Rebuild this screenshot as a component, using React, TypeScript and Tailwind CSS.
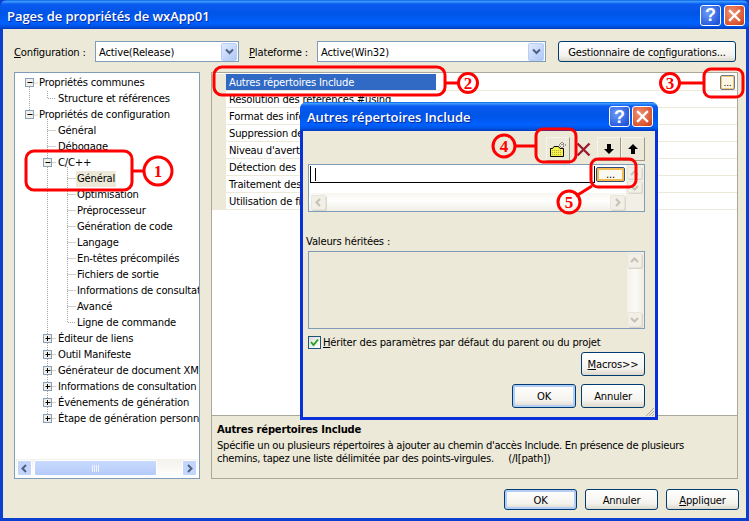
import React from "react";

const titleBg = "bg-[linear-gradient(180deg,#0a5fe0_0%,#3c9bff_5%,#0a5cf0_14%,#0054e6_45%,#0060ff_80%,#0052e0_92%,#0138c0_100%)]";
const btn = "flex items-center justify-center rounded-[3px] border border-[#003c74] bg-[linear-gradient(180deg,#ffffff_0%,#f4f3ee_70%,#dcd8cc_100%)] pt-px text-black";

function CapButton({ kind }: { kind: "help" | "close" }) {
  const cls = kind === "help"
    ? "bg-[radial-gradient(circle_at_35%_35%,#6f9cf5,#2a5fe0_70%,#1c45c4)]"
    : "bg-[radial-gradient(circle_at_35%_35%,#ef8f72,#dc5a34_65%,#c23a1c)]";
  return (
    <div className={`flex h-[21px] w-[21px] items-center justify-center rounded-[3px] border border-white ${cls}`}>
      {kind === "help" ? (
        <span className="font-['Liberation_Sans',sans-serif] text-[18px] leading-[20px] font-bold text-white">?</span>
      ) : (
        <svg width="13" height="13" viewBox="0 0 13 13">
          <path d="M2 2 L11 11 M11 2 L2 11" stroke="#fff" strokeWidth="2.4" strokeLinecap="square" />
        </svg>
      )}
    </div>
  );
}

function TitleBar({ text, pl, pr, pt, gap }: { text: string; pl: string; pr: string; pt: string; gap: string }) {
  return (
    <div className={`flex h-[29px] shrink-0 items-center justify-between rounded-t-[7px] ${titleBg} ${pl} ${pr} ${pt}`}>
      <span className="pt-[2px] font-['Open_Sans',sans-serif] text-[13px] font-semibold tracking-[-0.05px] text-white [text-shadow:1px_1px_#0a2a9c]">{text}</span>
      <div className={`flex ${gap}`}>
        <CapButton kind="help" />
        <CapButton kind="close" />
      </div>
    </div>
  );
}

function Combo({ text, w }: { text: string; w: string }) {
  return (
    <div className={`flex h-[21px] items-center justify-between border border-[#7f9db9] bg-white pl-[3px] pr-px ${w}`}>
      <span className="pt-px">{text}</span>
      <div className="flex h-[18px] w-[16px] items-center justify-center rounded-[2px] border border-[#b9cdf7] bg-[linear-gradient(135deg,#e1eafe,#aec8f7)]">
        <svg width="9" height="7" viewBox="0 0 9 7">
          <path d="M1 1.5 L4.5 5 L8 1.5" fill="none" stroke="#4d6185" strokeWidth="2" />
        </svg>
      </div>
    </div>
  );
}

const G = "#a5a5a5";
function Dot({ d }: { d: string }) {
  return <path d={d} stroke={G} strokeWidth="1" strokeDasharray="1 1" fill="none" />;
}
function Box({ x, plus }: { x: number; plus?: boolean }) {
  return (
    <g>
      <rect x={x - 4} y={3.5} width="8" height="8" fill="#f1efe6" stroke="#8aa0b8" />
      <path d={`M${x - 2} 7.5 H${x + 3}`} stroke="#000" />
      {plus && <path d={`M${x + 0.0} 5 V10`} stroke="#000" />}
    </g>
  );
}

type Kind = "r0" | "c0" | "r1" | "a" | "m" | "b" | "bl" | "p" | "pl";
function prefix(kind: Kind) {
  const x0 = 14.5, x1 = 32.5, x2 = 52.5;
  switch (kind) {
    case "r0": return <><Dot d={`M${x0} 8 V16 M${x0} 8 H23`} /><Box x={x0} /></>;
    case "c0": return <><Dot d={`M${x0} 0 V16 M${x1} 0 V7.5 H41`} /></>;
    case "r1": return <><Dot d={`M${x0} 0 V8 M${x0} 8 H23 M${x1} 12 V16`} /><Box x={x0} /></>;
    case "a": return <Dot d={`M${x1} 0 V16 M${x1} 7.5 H41`} />;
    case "m": return <><Dot d={`M${x1} 0 V16 M${x1} 7.5 H41 M${x2} 12 V16`} /><Box x={x1} /></>;
    case "b": return <Dot d={`M${x1} 0 V16 M${x2} 0 V16 M${x2} 7.5 H61`} />;
    case "bl": return <Dot d={`M${x1} 0 V16 M${x2} 0 V7.5 H61`} />;
    case "p": return <><Dot d={`M${x1} 0 V16 M${x1} 7.5 H41`} /><Box x={x1} plus /></>;
    case "pl": return <><Dot d={`M${x1} 0 V8 M${x1} 7.5 H41`} /><Box x={x1} plus /></>;
  }
}

const tree: [string, Kind, boolean?][] = [
  ["Propriétés communes", "r0"],
  ["Structure et références", "c0"],
  ["Propriétés de configuration", "r1"],
  ["Général", "a"],
  ["Débogage", "a"],
  ["C/C++", "m"],
  ["Général", "b", true],
  ["Optimisation", "b"],
  ["Préprocesseur", "b"],
  ["Génération de code", "b"],
  ["Langage", "b"],
  ["En-têtes précompilés", "b"],
  ["Fichiers de sortie", "b"],
  ["Informations de consultation du code source", "b"],
  ["Avancé", "b"],
  ["Ligne de commande", "bl"],
  ["Éditeur de liens", "p"],
  ["Outil Manifeste", "p"],
  ["Générateur de document XML", "p"],
  ["Informations de consultation", "p"],
  ["Événements de génération", "p"],
  ["Étape de génération personnalisée", "pl"],
];

function TreeRow({ label, kind, selected }: { label: string; kind: Kind; selected?: boolean }) {
  const w = kind === "r0" || kind === "r1" ? 23 : kind === "c0" || kind === "a" || kind === "m" || kind === "p" || kind === "pl" ? 42 : 61;
  return (
    <div className="flex h-4 items-center">
      <svg width={w} height="16" className="shrink-0 overflow-visible">{prefix(kind)}</svg>
      <span className={`whitespace-nowrap px-px leading-4 ${selected ? "bg-[#ece9d8]" : ""}`}>{label}</span>
    </div>
  );
}

function ScrollArrow({ dir, faded }: { dir: "left" | "right" | "up" | "down"; faded?: boolean }) {
  const d = { left: "M6 1 L2.5 4.5 L6 8", right: "M3 1 L6.5 4.5 L3 8", up: "M1 6 L4.5 2.5 L8 6", down: "M1 3 L4.5 6.5 L8 3" }[dir];
  return (
    <svg width="9" height="9" viewBox="0 0 9 9">
      <path d={d} fill="none" stroke={faded ? "#c4c2b6" : "#4d6185"} strokeWidth="2" />
    </svg>
  );
}

function FadedBtn({ dir, cls }: { dir: "left" | "right" | "up" | "down"; cls: string }) {
  return (
    <div className={`flex items-center justify-center rounded-[2px] border border-[#e8e6dc] bg-[#f1efe6] shadow-[1px_1px_0_#d8d6ca] ${cls}`}>
      <ScrollArrow dir={dir} faded />
    </div>
  );
}

const props = [
  "Résolution des références #using",
  "Format des informations de débogage",
  "Suppression de la bannière de démarrage",
  "Niveau d'avertissement",
  "Détection des problèmes de portabilité 64 bits",
  "Traitement des avertissements comme des erreurs",
  "Utilisation de fibres pour la sortie",
];

function Tool({ children }: { children: React.ReactNode }) {
  return (
    <div className="flex h-[24px] w-[24px] items-center justify-center border border-[#f5f4ee] border-r-[#9d9a8a] border-b-[#9d9a8a] bg-[#ece9d8]">
      {children}
    </div>
  );
}

function Dialog() {
  return (
    <div className="absolute left-[300px] top-[102px] flex h-[318px] w-[358px] flex-col rounded-t-[7px] bg-[#0831d9]">
      <TitleBar text="Autres répertoires Include" pl="pl-[7px]" pr="pr-[5px]" pt="pt-0" gap="gap-[2px]" />
      <div className="relative mx-[3px] mb-[3px] flex min-h-0 flex-1 flex-col bg-[#ece9d8] pl-[5px] pr-[10px]">
        <div className="flex justify-end pt-[6px]">
          <Tool>
            <svg width="18" height="17" viewBox="0 0 18 17">
              <path d="M1.5 7.5 H3.5 L5 5.5 H9.5 L11 7.5 H14.5 V15.5 H1.5 Z" fill="#f4f04a" stroke="#000" />
              <path d="M3 9.5H13M3 11.5H13M3 13.5H13" stroke="#b5ad3c" strokeDasharray="1 1" />
              <path d="M13 1v3M13 6v2M10 4h2M14 4h3M11 2l1 1M15 2l-1 1M11 6l1-1M15 6l-1-1" stroke="#4a4a4a" strokeDasharray="1 1" />
            </svg>
          </Tool>
          <div className="flex h-[24px] w-[27px] items-center justify-center">
            <svg width="15" height="15" viewBox="0 0 15 15">
              <path d="M1.5 1.5 L13.5 13.5 M13.5 1.5 L1.5 13.5" stroke="#9a1c30" strokeWidth="2.4" />
            </svg>
          </div>
          <Tool>
            <svg width="10" height="10" viewBox="0 0 10 10"><path d="M3 0H7V5H10L5 10L0 5H3Z" fill="#000" /></svg>
          </Tool>
          <Tool>
            <svg width="10" height="10" viewBox="0 0 10 10"><path d="M3 10H7V5H10L5 0L0 5H3Z" fill="#000" /></svg>
          </Tool>
        </div>
        <div className="mt-[3px] flex h-[48px] flex-col border border-[#7f9db9] bg-[#f1efe6]">
          <div className="flex h-[28px] bg-white">
            <div className="flex min-w-0 flex-1 flex-col pl-px pt-px">
              <div className="flex h-[17px] items-center border-b border-l border-r border-black pl-[4px]">
                <span className="block h-[13px] w-px bg-black" />
              </div>
            </div>
            <div className="flex w-[31px] items-start pl-px pt-[2px]">
              <div className="flex h-[15px] w-[29px] items-end justify-center rounded-[2px] border border-[#2c4c7c] bg-[#fbfaf2] text-[10px] leading-[12px] shadow-[inset_0_0_0_2px_#f4bd52]">...</div>
            </div>
            <div className="flex w-[18px] flex-col gap-[2px] bg-[#f1efe6] pl-px pt-[2px]">
              <FadedBtn dir="up" cls="h-[12px] w-[15px]" />
              <FadedBtn dir="down" cls="h-[12px] w-[15px]" />
            </div>
          </div>
          <div className="mr-[18px] flex flex-1 items-center justify-between bg-[linear-gradient(180deg,#f6f5ef,#ffffff_40%,#f0eee4)] pl-[2px] pr-px">
            <FadedBtn dir="left" cls="h-[15px] w-[15px]" />
            <FadedBtn dir="right" cls="h-[15px] w-[15px]" />
          </div>
        </div>
        <div className="-ml-[2px] mt-[23px] h-[14px] leading-[14px]">Valeurs héritées :</div>
        <div className="mt-[2px] flex h-[78px] justify-end border border-[#7f9db9]">
          <div className="flex w-[17px] flex-col justify-between bg-[linear-gradient(90deg,#f3f1e8,#fbfaf5,#f0eee4)] py-px">
            <FadedBtn dir="up" cls="h-[15px] w-[15px]" />
            <FadedBtn dir="down" cls="h-[15px] w-[15px]" />
          </div>
        </div>
        <div className="mt-[6px] flex h-[14px] items-center gap-[2px]">
          <div className="flex h-[13px] w-[13px] items-center justify-center border border-[#1c5180] bg-[linear-gradient(135deg,#dcdcd6,#ffffff)]">
            <svg width="9" height="9" viewBox="0 0 9 9"><path d="M1 4 L3.5 7 L8 1.5" fill="none" stroke="#21a121" strokeWidth="1.8" /></svg>
          </div>
          <span className="whitespace-nowrap"><u>H</u>ériter des paramètres par défaut du parent ou du projet</span>
        </div>
        <div className="mt-[3px] flex justify-end">
          <div className={`${btn} h-[24px] w-[64px]`}><span><u>M</u>acros&gt;&gt;</span></div>
        </div>
        <div className="mt-[8px] flex justify-end gap-[5px]">
          <div className={`${btn} h-[24px] w-[64px] shadow-[inset_0_0_0_2px_#b4cdf5]`}>OK</div>
          <div className={`${btn} h-[24px] w-[64px]`}>Annuler</div>
        </div>
        <svg width="10" height="10" viewBox="0 0 10 10" className="absolute bottom-0 right-0">
          <path d="M9 1 L1 9 M9 4 L4 9 M9 7 L7 9" stroke="#a8a596" />
        </svg>
      </div>
    </div>
  );
}

function Marks() {
  const numCls = "font-['Liberation_Serif',serif] text-[17px] font-bold";
  const num = (x: number, y: number, n: string) => (
    <text x={x} y={y} textAnchor="middle" fill="#ff0000" className={numCls}>{n}</text>
  );
  return (
    <svg width="749" height="521" className="pointer-events-none absolute left-0 top-0">
      <g fill="none" stroke="#ff0000" strokeWidth="3">
        <rect x="26" y="151" width="106" height="39" rx="8" />
        <path d="M132 171 H144" />
        <circle cx="158" cy="171" r="14" />
        <rect x="214" y="67" width="231" height="28" rx="8" />
        <path d="M445 83 H458" />
        <circle cx="468" cy="83" r="9.5" />
        <path d="M680 83 H704" />
        <circle cx="670" cy="83" r="9.5" />
        <rect x="704" y="69" width="39" height="28" rx="7" />
        <path d="M516 146 H536" />
        <circle cx="504" cy="146" r="11" />
        <rect x="536" y="129" width="40" height="33" rx="7" />
        <rect x="591" y="159" width="45" height="28" rx="7" />
        <path d="M592 186 L576 196" />
        <circle cx="569" cy="202" r="11" />
      </g>
      {num(158, 177, "1")}
      {num(468, 89, "2")}
      {num(670, 89, "3")}
      {num(504, 152, "4")}
      {num(569, 208, "5")}
    </svg>
  );
}

export default function App() {
  return (
    <div className="relative flex h-[521px] w-[749px] flex-col overflow-hidden bg-[#0a3fd0] font-['DejaVu_Sans',sans-serif] text-[10px] leading-[13px] tracking-[-0.18px] text-black">
      <TitleBar text="Pages de propriétés de wxApp01" pl="pl-[7px]" pr="pr-[4px]" pt="pt-px" gap="gap-[3px]" />
      <div className="mx-[3px] mb-[3px] flex min-h-0 flex-1 flex-col bg-[#ece9d8] pl-[11px] pr-[7px]">
        <div className="mt-[12px] flex h-[21px] items-center">
          <span className="w-[81px] pt-px"><u>C</u>onfiguration :</span>
          <Combo text="Active(Release)" w="w-[144px]" />
          <span className="ml-[10px] w-[68px] pt-px"><u>P</u>lateforme :</span>
          <Combo text="Active(Win32)" w="w-[229px]" />
          <div className={`${btn} ml-[12px] h-[21px] w-[178px]`}><span>Gestionnaire de co<u>n</u>figurations...</span></div>
        </div>
        <div className="mt-[10px] flex h-[407px] gap-[11px]">
          <div className="flex w-[186px] shrink-0 flex-col border border-[#7f9db9] bg-white">
            <div className="min-h-0 flex-1 overflow-hidden pt-[2px]">
              {tree.map(([l, k, s], i) => (
                <TreeRow key={i} label={l} kind={k} selected={s} />
              ))}
            </div>
            <div className="mx-px mb-px flex h-[18px] items-center bg-[linear-gradient(180deg,#f3f1ea,#ffffff)] px-px">
              <div className="flex h-[16px] w-[15px] items-center justify-center rounded-[2px] border border-white bg-[#c3d5fb]"><ScrollArrow dir="left" /></div>
              <div className="ml-[2px] flex h-[16px] w-[123px] items-center justify-center rounded-[2px] border border-white bg-[linear-gradient(180deg,#c9daff,#b4cbf8)]">
                <svg width="8" height="7"><path d="M0.5 0V7M2.5 0V7M4.5 0V7M6.5 0V7" stroke="#eef3ff" /></svg>
              </div>
              <div className="flex-1" />
              <div className="flex h-[16px] w-[15px] items-center justify-center rounded-[2px] border border-white bg-[#c3d5fb]"><ScrollArrow dir="right" /></div>
            </div>
          </div>
          <div className="mr-px flex min-w-0 flex-1 flex-col border-l border-r border-t border-[#aca899] bg-white">
            <div className="flex flex-col pt-px">
              <div className="flex h-[17px] border-b border-[#ece9d8]">
                <div className="w-[14px] bg-[#ece9d8]" />
                <div className="flex w-[210px] items-center bg-[#316ac5] pl-[3px] pt-px text-white">Autres répertoires Include</div>
                <div className="flex flex-1 items-center justify-end pr-[2px]">
                  <div className="flex h-[15px] w-[15px] items-end justify-center rounded-[2px] border border-[#6b7a8c] bg-[#fdf6e3] text-[9px] leading-[11px] shadow-[inset_0_0_0_1px_#f4c870]">...</div>
                </div>
              </div>
              {props.map((p) => (
                <div key={p} className="flex h-[17px] border-b border-[#ece9d8]">
                  <div className="w-[14px] bg-[#ece9d8]" />
                  <div className="flex w-[210px] items-center whitespace-nowrap pl-[3px] pt-px">{p}</div>
                </div>
              ))}
            </div>
            <div className="flex-1" />
            <div className="flex h-[64px] flex-col border-t border-[#aca899] bg-[#ece9d8] pl-[5px] shadow-[inset_0_-1px_0_#aca899]">
              <div className="mt-[7px] font-bold leading-[13px]">Autres répertoires Include</div>
              <div className="mt-[3px] whitespace-pre leading-[13px] tracking-[-0.27px]">{"Spécifie un ou plusieurs répertoires à ajouter au chemin d'accès Include. En présence de plusieurs\nchemins, tapez une liste délimitée par des points-virgules.     (/I[path])"}</div>
            </div>
          </div>
        </div>
        <div className="mt-[10px] flex justify-end gap-[8px]">
          <div className={`${btn} h-[21px] w-[73px] shadow-[inset_0_0_0_2px_#b4cdf5]`}>OK</div>
          <div className={`${btn} h-[21px] w-[73px]`}>Annuler</div>
          <div className={`${btn} h-[21px] w-[73px]`}><span><u>A</u>ppliquer</span></div>
        </div>
      </div>
      <Dialog />
      <Marks />
    </div>
  );
}
